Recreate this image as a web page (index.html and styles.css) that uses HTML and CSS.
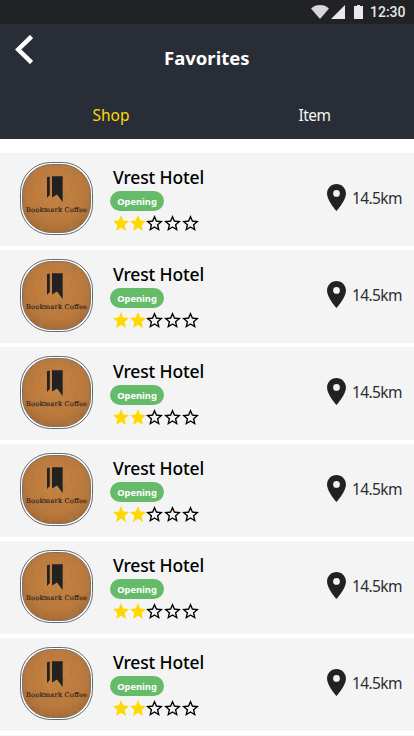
FILE: index.html
```html
<!DOCTYPE html>
<html lang="en">
<head>
<meta charset="utf-8">
<title>Favorites</title>
<link rel="stylesheet" href="styles.css">
</head>
<body>
<svg class="defs" aria-hidden="true">
  <defs>
    <radialGradient id="wood" cx="50%" cy="42%" r="65%">
      <stop offset="0" stop-color="#c88544"/>
      <stop offset="0.65" stop-color="#bd793b"/>
      <stop offset="1" stop-color="#a3632f"/>
    </radialGradient>
    <filter id="grain" x="0" y="0" width="100%" height="100%">
      <feTurbulence type="fractalNoise" baseFrequency="0.28 0.07" numOctaves="3" seed="4"/>
      <feColorMatrix values="0 0 0 0 0.4  0 0 0 0 0.2  0 0 0 0 0.06  1.6 0 0 0 -0.65"/>
      <feComposite in2="SourceGraphic" operator="in"/>
    </filter>
    <symbol id="star" viewBox="2 2 20 19" preserveAspectRatio="none"><path d="M12 17.27 18.18 21l-1.64-7.03L22 9.24l-7.19-.61L12 2 9.19 8.63 2 9.24l5.46 4.73L5.82 21z"/></symbol>
    <symbol id="star-outline" viewBox="2 2 20 19" preserveAspectRatio="none"><path d="M22 9.24l-7.19-.62L12 2 9.19 8.63 2 9.24l5.46 4.73L5.82 21 12 17.27 18.18 21l-1.63-7.03L22 9.24zM12 15.4l-3.76 2.27 1-4.28-3.32-2.88 4.38-.38L12 6.1l1.71 4.04 4.38.38-3.32 2.88 1 4.28L12 15.4z"/></symbol>
    <symbol id="pin" viewBox="5 2 14 20"><path d="M12 2C8.13 2 5 5.13 5 9c0 5.25 7 13 7 13s7-7.75 7-13c0-3.87-3.13-7-7-7zm0 9.5a2.5 2.5 0 0 1 0-5 2.5 2.5 0 0 1 0 5z"/></symbol>
    <symbol id="coffee" viewBox="0 0 73 73">
      <rect x=".5" y=".5" width="72" height="72" rx="30" fill="#fff" stroke="#686868"/>
      <rect x="2.5" y="2.5" width="68" height="68" rx="29" fill="url(#wood)"/>
      <rect x="2.5" y="2.5" width="68" height="68" rx="29" filter="url(#grain)"/>
      <rect x="2.5" y="2.5" width="68" height="68" rx="29" fill="none" stroke="#77716c"/>
      <path fill="#242122" d="M27 15.2l2.8-.7V33L27 36zM32 14.3h10.7V40L37 32.4 32 35.5z"/>
      <text x="6" y="49.5" textLength="61" lengthAdjust="spacing" class="coffee-name">Bookmark Coffee</text>
    </symbol>
  </defs>
</svg>

<div class="screen">
  <div class="status">
    <svg class="status-wifi" viewBox="0 0 18 14"><path fill="#d6d6d6" d="M9 14 0 3.4C2.6 1.2 5.6 0 9 0s6.400 1.2 9 3.400z"/></svg>
    <svg class="status-signal" viewBox="0 0 14 14"><path fill="#e9e9e9" d="M14 0v14H0z"/></svg>
    <svg class="status-battery" viewBox="0 0 9 14"><path fill="#e9e9e9" d="M3 0h3v1h3v13H0V1h3z"/></svg>
    <span class="status-time">12:30</span>
  </div>
  <header class="header">
    <div class="bar">
      <svg class="back" viewBox="0 0 18 29"><path d="M16.5 1.5 3.2 14.5l13.3 13" fill="none" stroke="#fff" stroke-width="4.5"/></svg>
      <h1 class="title">Favorites</h1>
    </div>
    <nav class="tabs">
      <a class="tab tab-active"><span class="shop">Shop</span></a>
      <a class="tab"><span class="item">Item</span></a>
    </nav>
  </header>
  <main class="list" id="list"></main>
</div>
<template id="row">
  <article class="row">
    <svg class="avatar"><use href="#coffee"/></svg>
    <div class="info">
      <h2 class="name"></h2>
      <span class="badge">Opening</span>
      <div class="stars"></div>
    </div>
    <div class="place">
      <svg class="pin"><use href="#pin"/></svg>
      <span class="distance"></span>
    </div>
  </article>
</template>
<script src="app.js"></script>
</body>
</html>
```
FILE: styles.css
```css
* { box-sizing: border-box; }
body {
  margin: 0;
  background: #fff;
  font-family: "Noto Sans", "Open Sans", sans-serif;
  overflow: hidden;
}
.defs { position: absolute; width: 0; height: 0; }
.screen { height: 736px; overflow: hidden; }
.status {
  display: flex;
  align-items: center;
  height: 24px;
  padding-left: 311px;
  background: #212225;
}
.status-wifi { width: 18px; height: 14px; }
.status-signal { width: 14px; height: 14px; margin-left: 2px; }
.status-battery { width: 9px; height: 14px; margin-left: 9px; }
.status-time {
  margin-left: 7px;
  color: #e6e6e6;
  font: 500 14px/24px Roboto, sans-serif;
}
.header { height: 115px; background: #292d36; }
.bar { display: flex; height: 68px; padding: 11px 0 0 15px; }
.back { width: 18px; height: 29px; }
.title {
  margin: 10px 0 0 131px;
  color: #fff;
  font-size: 18.5px;
  font-weight: 700;
  line-height: 26px;
  white-space: nowrap;
}
.tabs { display: flex; height: 47px; }
.tab { flex: none; width: 207px; color: #f5f5f5; font-size: 15.5px; line-height: 47px; }
.tab-active { color: #ffd70a; }
.shop { margin-left: 92.5px; }
.item { margin-left: 91.5px; letter-spacing: -0.5px; }
.list { display: flex; flex-direction: column; gap: 4px; padding-top: 14px; }
.row { flex: none; display: flex; height: 93px; padding: 9px 11px 0 20px; background: #f4f4f4; }
.avatar { width: 73px; height: 73px; }
.coffee-name { font: 400 6.6px "DejaVu Serif", serif; fill: #2b211d; stroke: #2b211d; stroke-width: 0.15px; }
.info { display: flex; flex-direction: column; align-items: flex-start; margin-left: 17px; }
.name {
  margin: 2px 0 1px 3px;
  color: #000;
  font-size: 17.5px;
  font-weight: 500;
  line-height: 26px;
  letter-spacing: -0.15px;
  white-space: nowrap;
}
.badge {
  width: 54px;
  height: 20px;
  border-radius: 10px;
  background: #66bb6a;
  color: #fff;
  font-size: 9.3px;
  font-weight: 700;
  line-height: 21px;
  text-align: center;
}
.stars { display: flex; gap: 1px; margin: 4px 0 0 3px; }
.star { width: 17px; height: 16px; fill: #000; }
.star-on { width: 16px; fill: #ffd800; }
.star-on + .star:not(.star-on) { margin-left: -1px; }
.place { display: flex; margin: 22px 0 0 auto; }
.pin { width: 19px; height: 27px; fill: #222; }
.distance {
  width: 51px;
  margin-left: 6px;
  color: #2c2c2c;
  font-size: 15.5px;
  font-weight: 400;
  line-height: 29px;
  letter-spacing: -0.6px;
  white-space: nowrap;
}
.row-peek { height: 1px; padding: 0; }
```
FILE: app.js
```js
const shops = Array.from({ length: 6 }, () => ({ name: "Vrest Hotel", distance: "14.5km", rating: 2 }));
const template = document.getElementById("row");
const list = document.getElementById("list");
for (const shop of shops) {
  const row = template.content.cloneNode(true);
  row.querySelector(".name").textContent = shop.name;
  row.querySelector(".distance").textContent = shop.distance;
  row.querySelector(".stars").innerHTML = [1, 2, 3, 4, 5].map(n =>
    n <= shop.rating
      ? '<svg class="star star-on"><use href="#star"/></svg>'
      : '<svg class="star"><use href="#star-outline"/></svg>').join("");
  list.append(row);
}
const peek = document.createElement("div");
peek.className = "row row-peek";
list.append(peek);
```
